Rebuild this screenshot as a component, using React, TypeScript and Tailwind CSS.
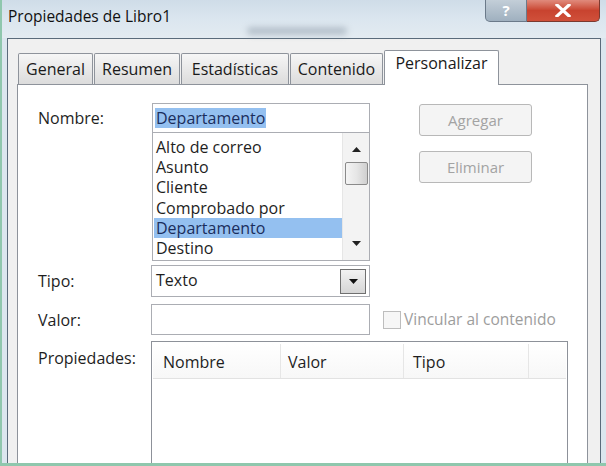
import React from "react";

const items = ["Alto de correo", "Asunto", "Cliente", "Comprobado por", "Departamento", "Destino"];

function Tab({ label, w, selected }: { label: string; w: string; selected?: boolean }) {
  if (selected) {
    return (
      <div
        className={`${w} h-[35px] -mb-px relative z-10 bg-white border border-b-0 border-[#8e939b] rounded-t-[2px] flex items-start justify-center pt-[4px] text-[#1a1a1a]`}
      >
        {label}
      </div>
    );
  }
  return (
    <div
      className={`${w} h-[31px] bg-gradient-to-b from-[#f6f6f6] to-[#dcdcdc] border border-b-0 border-[#8e939b] rounded-t-[2px] flex items-center justify-center text-[#1a1a1a]`}
    >
      {label}
    </div>
  );
}

export default function App() {
  return (
    <div
      className="w-[606px] h-[466px] overflow-hidden flex flex-col bg-[#dbe6ee] border-l-[2px] border-b-[3px] border-[#8fc7ad] text-[16px] leading-none"
      style={{ fontFamily: "'Open Sans', 'Noto Sans', sans-serif" }}
    >
      {/* Title bar */}
      <div className="h-[38px] shrink-0 relative bg-gradient-to-b from-[#cfdce8] via-[#dbe6ef] to-[#e3ebf1] flex items-start">
        <div className="pl-[6px] pt-[9px] text-[15.5px] text-[#111]">Propiedades de Libro1</div>
        <div className="absolute left-[245px] top-[27px] w-[100px] h-[8px] rounded-full bg-[#8a98a6] opacity-50 blur-[3px]" />
        <div className="absolute right-[6px] top-0 flex h-[22px]">
          <div className="w-[42px] h-[22px] rounded-bl-[5px] border border-t-0 border-[#6b7a8a] bg-gradient-to-b from-[#c3ced8] to-[#9fb0bf] flex items-center justify-center text-[15px] font-bold text-white">
            ?
          </div>
          <div className="w-[73px] h-[22px] rounded-br-[5px] border border-t-0 border-l-0 border-[#7a3a30] bg-gradient-to-b from-[#e08a7c] via-[#c8432f] to-[#d0503a] flex items-center justify-center">
            <svg width="16" height="13" viewBox="0 0 16 13">
              <path d="M2 1 L14 12 M14 1 L2 12" stroke="white" strokeWidth="3.2" strokeLinecap="square" />
            </svg>
          </div>
        </div>
      </div>

      {/* Body */}
      <div className="flex-1 flex pl-[5px]">
        <div className="w-[594px] h-full bg-[#f0f0f0] border-l border-t border-r border-[#5a6b7b] pl-[9px] pt-[11px] flex flex-col">
          {/* Tabs */}
          <div className="flex items-end pl-[1px] h-[34px] gap-[1px]">
            <Tab label="General" w="w-[75px]" />
            <Tab label="Resumen" w="w-[86px]" />
            <Tab label="Estadísticas" w="w-[108px]" />
            <Tab label="Contenido" w="w-[93px]" />
            <Tab label="Personalizar" w="w-[115px]" selected />
          </div>

          {/* Panel */}
          <div className="w-[571px] flex-1 bg-white border-l border-t border-r border-[#8e939b] pt-[18px] flex flex-col text-[#1e1e1e]">
            {/* Nombre row */}
            <div className="flex">
              <div className="w-[134px] pl-[20px] h-[29px] flex items-center">Nombre:</div>
              <div className="w-[218px] flex flex-col">
                <div className="h-[30px] border border-[#abadb3] flex items-center pl-[2px]">
                  <span className="bg-[#94c0f0] text-[#1b2e5c] px-[1px] py-[2px]">Departamento</span>
                </div>
                <div className="h-[129px] -mt-px border border-[#abadb3] flex">
                  <div className="flex-1 pt-[4px] pl-[1px]">
                    {items.map((it) => (
                      <div
                        key={it}
                        className={`h-[20.2px] flex items-center pl-[2px] ${
                          it === "Departamento" ? "bg-[#94c0f0] text-[#1b2e5c]" : ""
                        }`}
                      >
                        {it}
                      </div>
                    ))}
                  </div>
                  <div className="w-[27px] bg-[#f3f3f3] border-l border-[#e6e6e6] flex flex-col items-center pt-[14px]">
                    <svg width="9" height="5" viewBox="0 0 9 5">
                      <path d="M0 5 L4.5 0 L9 5 Z" fill="#222" />
                    </svg>
                    <div className="mt-[10px] w-[23px] h-[23px] rounded-[2px] border border-[#8a8a8a] bg-gradient-to-r from-[#f4f4f4] via-[#e6e6e6] to-[#cfcfcf]" />
                    <div className="flex-1" />
                    <svg width="9" height="5" viewBox="0 0 9 5" className="mb-[14px]">
                      <path d="M0 0 L4.5 5 L9 0 Z" fill="#222" />
                    </svg>
                  </div>
                </div>
              </div>
              <div className="ml-[49px] flex flex-col gap-[15px] pt-[1px]">
                <div className="w-[113px] h-[32px] rounded-[3px] border border-[#b8b8b8] bg-[#f4f4f4] flex items-center justify-center text-[#a3a3a3] text-[15px]">
                  Agregar
                </div>
                <div className="w-[113px] h-[32px] rounded-[3px] border border-[#b8b8b8] bg-[#f4f4f4] flex items-center justify-center text-[#a3a3a3] text-[15px]">
                  Eliminar
                </div>
              </div>
            </div>

            {/* Tipo row */}
            <div className="flex mt-[4px]">
              <div className="w-[134px] pl-[20px] h-[32px] flex items-center">Tipo:</div>
              <div className="w-[219px] -ml-px h-[32px] border border-[#abadb3] flex items-start pl-[4px]">
                <span className="flex-1 pt-[6px]">Texto</span>
                <div className="mt-[3px] mr-[3px] w-[26px] h-[25px] border border-[#707070] bg-gradient-to-b from-[#f2f2f2] to-[#d6d6d6] flex items-center justify-center">
                  <svg width="9" height="5" viewBox="0 0 9 5">
                    <path d="M0 0 L4.5 5 L9 0 Z" fill="#111" />
                  </svg>
                </div>
              </div>
            </div>

            {/* Valor row */}
            <div className="flex mt-[7px] items-center">
              <div className="w-[134px] pl-[20px] h-[31px] flex items-center">Valor:</div>
              <div className="w-[219px] -ml-px h-[31px] border border-[#abadb3]" />
              <div className="ml-[13px] w-[18px] h-[18px] border border-[#bdbdbd] bg-[#f6f6f6]" />
              <span className="ml-[3px] text-[#9d9d9d] text-[15.5px]">Vincular al contenido</span>
            </div>

            {/* Propiedades row */}
            <div className="flex mt-[6px] flex-1">
              <div className="w-[134px] pl-[20px] pt-[9px]">Propiedades:</div>
              <div className="w-[417px] -ml-px h-full border-l border-t border-r border-[#8d9199] pt-[2px] px-[1px]">
                <div className="h-[35px] border-b border-[#e2e2e2] bg-gradient-to-b from-white to-[#f7f7f7] flex">
                  <div className="w-[128px] border-r border-[#e6e6e6] pl-[10px] flex items-center pt-[2px]">Nombre</div>
                  <div className="w-[123px] border-r border-[#e6e6e6] pl-[7px] flex items-center pt-[2px]">Valor</div>
                  <div className="w-[125px] border-r border-[#e6e6e6] pl-[9px] flex items-center pt-[2px]">Tipo</div>
                  <div className="flex-1" />
                </div>
              </div>
            </div>
          </div>
        </div>
      </div>
    </div>
  );
}
